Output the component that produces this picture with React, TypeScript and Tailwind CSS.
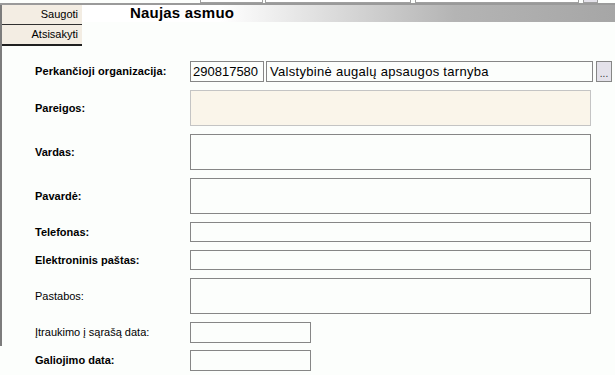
import React from "react";

const boldLabel = "text-[11px] font-bold text-black";
const normLabel = "text-[11px] text-black";

function Row({
  label,
  bold = true,
  h,
  w = "w-[401px]",
  fill = "bg-[#fcfefc] border-[#868686]",
}: {
  label: string;
  bold?: boolean;
  h: string;
  w?: string;
  fill?: string;
}) {
  return (
    <div className="flex items-center">
      <div className={`w-[155px] shrink-0 ${bold ? boldLabel : normLabel}`}>{label}</div>
      <div className={`${w} ${h} border ${fill}`} />
    </div>
  );
}

export default function App() {
  return (
    <div
      className="w-[615px] h-[375px] overflow-hidden bg-[#fcfefc] relative"
      style={{ fontFamily: '"Liberation Sans", Arial, sans-serif' }}
    >
      {/* top strip */}
      <div className="h-[3px] flex">
        <div className="w-[200px]" />
        <div className="w-[63px] bg-white border-x border-b border-[#a0a0a0]" />
        <div className="w-[2px]" />
        <div className="w-[146px] bg-white border-x border-b border-[#a0a0a0]" />
        <div className="w-[4px]" />
        <div className="w-[164px] bg-white border-x border-b border-[#a0a0a0]" />
        <div className="w-[4px]" />
        <div className="w-[15px] bg-[#e4e2ea] border-x border-b border-[#a0a0a0]" />
      </div>
      <div className="h-[2px] bg-[#9a9a9a]" />

      <div className="border-l-2 border-[#7c7c7c] pb-[3px]">
        {/* header */}
        <div className="flex">
          <div className="w-[80px] shrink-0 flex flex-col">
            <div className="h-[20px] bg-[#f3ede3] border-b border-[#303030] flex items-center justify-end pr-[4px] text-[11px] text-black">
              Saugoti
            </div>
            <div className="h-[21px] bg-[#f3ede3] border-b-2 border-[#202020] flex items-center justify-end pr-[4px] text-[11px] text-black">
              Atsisakyti
            </div>
          </div>
          <div className="flex-1 h-[17px] bg-[linear-gradient(to_right,#ffffff_26%,#b4b4b4_70%,#a6a6a6_100%)] pl-[48px] flex items-center">
            <span className="text-[15px] font-bold text-black tracking-[0.2px]">Naujas asmuo</span>
          </div>
        </div>

        {/* form */}
        <div className="pl-[33px] pt-[15px] flex flex-col gap-[8px]">
          <div className="flex items-center">
            <div className={`w-[155px] shrink-0 ${boldLabel} tracking-[0.1px]`}>Perkančioji organizacija:</div>
            <div className="w-[74px] h-[21px] border border-[#868686] bg-[#fcfefc] flex items-center pl-[2px] text-[13px] text-black">
              290817580
            </div>
            <div className="w-[327px] h-[21px] ml-[2px] border border-[#868686] bg-[#fcfefc] flex items-center pl-[3px] text-[13px] tracking-[0.3px] text-black">
              Valstybinė augalų apsaugos tarnyba
            </div>
            <div className="w-[16px] h-[21px] ml-[3px] border border-[#868686] bg-[#e4e2ea] flex items-end justify-center text-[10px] leading-[14px] text-[#333]">
              ...
            </div>
          </div>
          <Row label="Pareigos:" h="h-[36px]" fill="bg-[#faf5ea] border-[#c4c4c4]" />
          <Row label="Vardas:" h="h-[36px]" />
          <Row label="Pavardė:" h="h-[36px]" />
          <Row label="Telefonas:" h="h-[20px]" />
          <Row label="Elektroninis paštas:" h="h-[20px]" />
          <Row label="Pastabos:" bold={false} h="h-[36px]" />
          <Row label="Įtraukimo į sąrašą data:" bold={false} h="h-[21px]" w="w-[121px]" />
        </div>
      </div>
      <div className="pl-[35px] pt-[4px]">
        <Row label="Galiojimo data:" h="h-[21px]" w="w-[121px]" />
      </div>
    </div>
  );
}
